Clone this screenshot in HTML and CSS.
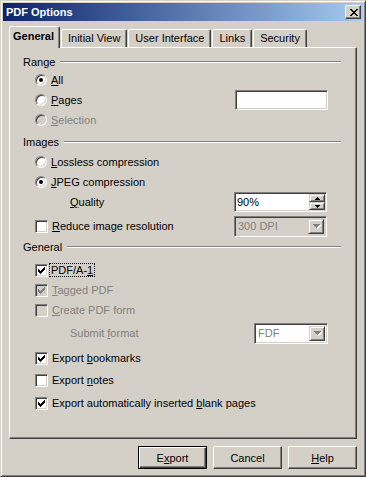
FILE: index.html
```html
<!DOCTYPE html>
<html lang="en">
<head>
    <meta charset="UTF-8">
    <title>PDF Options</title>
    <link rel="stylesheet" href="styles.css">
</head>
<body>
    <svg width="0" height="0" style="position:absolute">
        <symbol id="tick" viewBox="0 0 7 7">
            <path d="M6 0h1v1h-1zM5 1h2v1h-2zM0 2h1v1h-1zM4 2h3v1h-3zM0 3h2v1h-2zM3 3h3v1h-3zM0 4h5v1h-5zM1 5h3v1h-3zM2 6h1v1h-1z"/>
        </symbol>
        <symbol id="down" viewBox="0 0 7 4">
            <path d="M0 0h7v1h-7zM1 1h5v1h-5zM2 2h3v1h-3zM3 3h1v1h-1z"/>
        </symbol>
    </svg>

    <div class="window">
        <div class="titlebar">
            <span class="title">PDF Options</span>
            <span class="close">
                <svg width="8" height="7" viewBox="0 0 8 7" shape-rendering="crispEdges"><path d="M0 0h2v1h-2zM6 0h2v1h-2zM1 1h2v1h-2zM5 1h2v1h-2zM2 2h4v1h-4zM3 3h2v1h-2zM2 4h4v1h-4zM1 5h2v1h-2zM5 5h2v1h-2zM0 6h2v1h-2zM6 6h2v1h-2z"/></svg>
            </span>
        </div>

        <div class="tabs">
            <div class="tab active">General</div>
            <div class="tab">Initial View</div>
            <div class="tab">User Interface</div>
            <div class="tab">Links</div>
            <div class="tab">Security</div>
        </div>

        <div class="panel">
            <!-- Range -->
            <div class="legend"><span>Range</span><i></i></div>
            <div class="row m2">
                <span class="radio checked"></span>
                <span class="label"><u>A</u>ll</span>
            </div>
            <div class="row">
                <span class="radio"></span>
                <span class="label"><u>P</u>ages</span>
                <span class="field pages"></span>
            </div>
            <div class="row">
                <span class="radio off"></span>
                <span class="label dim"><u>S</u>election</span>
            </div>

            <!-- Images -->
            <div class="legend m5"><span>Images</span><i></i></div>
            <div class="row m4">
                <span class="radio"></span>
                <span class="label"><u>L</u>ossless compression</span>
            </div>
            <div class="row">
                <span class="radio checked"></span>
                <span class="label"><u>J</u>PEG compression</span>
            </div>
            <div class="row">
                <span class="label indent"><u>Q</u>uality</span>
                <span class="field spin">90%
                    <span class="spin-btns">
                        <b><svg width="5" height="3" viewBox="0 0 7 4" class="up"><use href="#down"/></svg></b>
                        <b><svg width="5" height="3" viewBox="0 0 7 4"><use href="#down"/></svg></b>
                    </span>
                </span>
            </div>
            <div class="row m4">
                <span class="check"></span>
                <span class="label"><u>R</u>educe image resolution</span>
                <span class="field combo dpi dim">300 DPI
                    <b class="drop"><svg width="7" height="4"><use href="#down"/></svg></b>
                </span>
            </div>

            <!-- General -->
            <div class="legend m4"><span>General</span><i></i></div>
            <div class="row m7">
                <span class="check"><svg width="7" height="7"><use href="#tick"/></svg></span>
                <span class="label focus">PDF/A-<u>1</u></span>
            </div>
            <div class="row">
                <span class="check off"><svg width="7" height="7"><use href="#tick"/></svg></span>
                <span class="label dim"><u>T</u>agged PDF</span>
            </div>
            <div class="row">
                <span class="check off"></span>
                <span class="label dim"><u>C</u>reate PDF form</span>
            </div>
            <div class="row tall m2">
                <span class="label indent dim">Submit <u>f</u>ormat</span>
                <span class="field combo fdf dim">FDF
                    <b class="drop"><svg width="7" height="4"><use href="#down"/></svg></b>
                </span>
            </div>
            <div class="row m4">
                <span class="check"><svg width="7" height="7"><use href="#tick"/></svg></span>
                <span class="label">Export <u>b</u>ookmarks</span>
            </div>
            <div class="row m2">
                <span class="check"></span>
                <span class="label">Export <u>n</u>otes</span>
            </div>
            <div class="row m3">
                <span class="check"><svg width="7" height="7"><use href="#tick"/></svg></span>
                <span class="label">Export automatically inserted <u>b</u>lank pages</span>
            </div>
        </div>

        <div class="buttons">
            <button class="default">E<u>x</u>port</button>
            <button>Cancel</button>
            <button><u>H</u>elp</button>
        </div>
    </div>
</body>
</html>
```

FILE: styles.css
```css
html, body {
    margin: 0;
    background-color: #d4d0c8;
    font-family: "Liberation Sans", Arial, sans-serif;
    font-size: 11px;
    color: #000;
}

u {
    text-decoration: underline;
    text-underline-offset: 1px;
}

.window {
    box-sizing: border-box;
    width: 366px;
    height: 477px;
    padding: 2px;
    background-color: #d4d0c8;
    border: 1px solid;
    border-color: #d4d0c8 #404040 #404040 #d4d0c8;
    box-shadow: inset 1px 1px #fff, inset -1px -1px #808080;
}

/* title bar */
.titlebar {
    height: 18px;
    display: flex;
    align-items: center;
    padding-left: 3px;
    background: linear-gradient(to right, #0a246a, #a6caf0);
}

.title {
    flex: 1;
    color: #fff;
    font-weight: bold;
}

.close {
    box-sizing: border-box;
    width: 16px;
    height: 14px;
    margin-right: 2px;
    display: flex;
    align-items: center;
    justify-content: center;
    background-color: #d4d0c8;
    border: 1px solid;
    border-color: #fff #404040 #404040 #fff;
    box-shadow: inset -1px -1px #808080;
}

.close svg {
    fill: #000;
    margin-top: 1px;
    margin-left: 1px;
}

/* tabs */
.tabs {
    height: 21px;
    margin-top: 5px;
    padding-left: 6px;
    display: flex;
    align-items: flex-end;
}

.tab {
    box-sizing: border-box;
    height: 18px;
    line-height: 16px;
    padding: 0 6px;
    margin-right: 1px;
    border-top: 1px solid #fff;
    border-left: 1px solid #fff;
    border-right: 1px solid #404040;
    border-radius: 2px 2px 0 0;
    box-shadow: inset -1px 0 #808080;
}

.tab.active {
    position: relative;
    z-index: 1;
    height: 22px;
    margin-bottom: -1px;
    line-height: 19px;
    padding: 0 5px 0 3px;
    font-weight: bold;
    background-color: #d4d0c8;
}

/* tab page */
.panel {
    box-sizing: border-box;
    width: 348px;
    height: 392px;
    margin-left: 6px;
    padding: 7px 15px 0 13px;
    border: 1px solid;
    border-color: #fff #404040 #404040 #fff;
    box-shadow: inset -1px -1px #808080;
}

.legend {
    height: 13px;
    display: flex;
    align-items: center;
}

.legend i {
    flex: 1;
    margin-left: 5px;
    border-top: 1px solid #808080;
    border-bottom: 1px solid #fff;
}

.row {
    height: 20px;
    display: flex;
    align-items: center;
    padding-left: 12px;
}

.row.tall {
    height: 22px;
}

.m2 { margin-top: 2px; }
.m3 { margin-top: 3px; }
.m4 { margin-top: 4px; }
.m5 { margin-top: 5px; }
.m7 { margin-top: 7px; }

.label {
    margin-left: 4px;
    white-space: nowrap;
}

.label.indent {
    margin-left: 35px;
}

.dim {
    color: #808080;
}

.focus {
    outline: 1px dotted #000;
    outline-offset: 0;
    padding: 0 1px;
    margin-left: 2px;
}

/* radio buttons */
.radio {
    position: relative;
    box-sizing: border-box;
    width: 12px;
    height: 12px;
    border-radius: 50%;
    background-color: #fff;
    border: 1px solid;
    border-color: #808080 #fff #fff #808080;
    box-shadow: inset 1px 1px #404040, inset -1px -1px #d4d0c8;
}

.radio.off {
    background-color: #d4d0c8;
}

.radio.checked::after {
    content: "";
    position: absolute;
    left: 3px;
    top: 3px;
    width: 4px;
    height: 4px;
    border-radius: 50%;
    background-color: #000;
}

/* check boxes */
.check {
    box-sizing: border-box;
    width: 13px;
    height: 13px;
    display: flex;
    align-items: center;
    justify-content: center;
    background-color: #fff;
    border: 1px solid;
    border-color: #808080 #fff #fff #808080;
    box-shadow: inset 1px 1px #404040, inset -1px -1px #d4d0c8;
}

.check svg {
    fill: #000;
    shape-rendering: crispEdges;
}

.check.off {
    background-color: #d4d0c8;
}

.check.off svg {
    fill: #808080;
}

/* text fields, spin box, combo boxes */
.field {
    box-sizing: border-box;
    position: relative;
    margin-left: auto;
    margin-right: 13px;
    height: 20px;
    padding-left: 2px;
    display: flex;
    align-items: center;
    background-color: #fff;
    border: 1px solid;
    border-color: #808080 #fff #fff #808080;
    box-shadow: inset 1px 1px #404040, inset -1px -1px #d4d0c8;
}

.field.pages {
    width: 93px;
}

.field.spin {
    width: 93px;
    margin-right: 14px;
}

.spin-btns {
    position: absolute;
    right: 1px;
    top: 1px;
    bottom: 1px;
    width: 16px;
    display: flex;
    flex-direction: column;
}

.spin-btns b,
.drop {
    box-sizing: border-box;
    flex: 1;
    display: flex;
    align-items: center;
    justify-content: center;
    background-color: #d4d0c8;
    border: 1px solid;
    border-color: #d4d0c8 #404040 #404040 #d4d0c8;
    box-shadow: inset 1px 1px #fff, inset -1px -1px #808080;
}

.spin-btns svg {
    fill: #000;
    shape-rendering: crispEdges;
}

.spin-btns .up {
    transform: scaleY(-1);
}

.field.combo {
    height: 21px;
    padding-left: 3px;
}

.field.dpi {
    width: 93px;
    margin-right: 14px;
    background-color: #d4d0c8;
}

.field.fdf {
    width: 74px;
}

.drop {
    position: absolute;
    right: 2px;
    top: 2px;
    bottom: 2px;
    width: 16px;
}

.drop svg {
    fill: #808080;
    shape-rendering: crispEdges;
    filter: drop-shadow(1px 1px 0 #fff);
}

/* dialog buttons */
.buttons {
    margin-top: 7px;
    margin-right: 6px;
    display: flex;
    justify-content: flex-end;
    gap: 6px;
}

.buttons button {
    box-sizing: border-box;
    width: 69px;
    height: 23px;
    padding: 0;
    font-family: "Liberation Sans", Arial, sans-serif;
    font-size: 11px;
    color: #000;
    background-color: #d4d0c8;
    border: 1px solid;
    border-color: #fff #404040 #404040 #fff;
    box-shadow: inset -1px -1px #808080;
}

.buttons button.default {
    border-color: #000;
    box-shadow: inset 1px 1px #fff, inset -1px -1px #404040, inset -2px -2px #808080;
}
```
